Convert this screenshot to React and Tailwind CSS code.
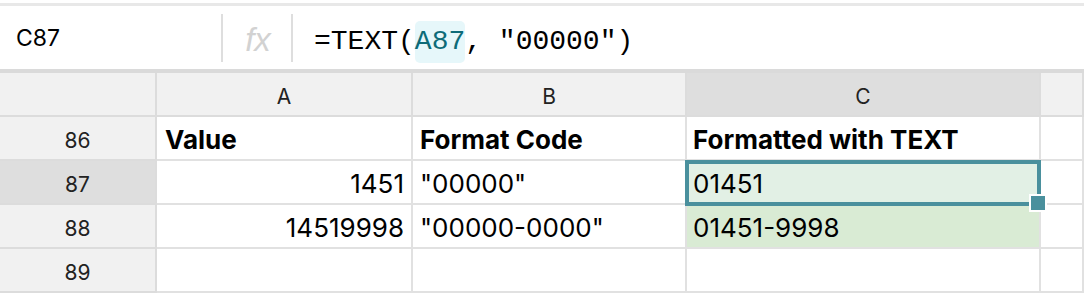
const rows = [
  { n: 86, a: "Value", b: "Format Code", c: "Formatted with TEXT", bold: true },
  { n: 87, a: "1451", b: '"00000"', c: "01451", selected: true },
  { n: 88, a: "14519998", b: '"00000-0000"', c: "01451-9998", green: true },
  { n: 89, a: "", b: "", c: "" },
];

const cellBase = "h-[44px] border-b-2 border-r-2 border-[#e1e1e1] flex items-center pt-[3px] text-[26px] leading-none text-black whitespace-nowrap";

export default function App() {
  return (
    <div className="w-[1084px] h-[294px] bg-white overflow-hidden" style={{ fontFamily: "Inter, 'Noto Sans', sans-serif" }}>
      <div className="h-[3px] bg-white" />
      <div className="h-[3px] bg-[#e8e8e8]" />

      {/* formula bar */}
      <div className="h-[63px] flex items-center border-b-4 border-[#dadada] box-content">
        <div className="w-[221px] pl-4 pt-[2px] text-[23px] text-black">C87</div>
        <div className="w-[2px] h-[48px] bg-[#dedede]" />
        <div className="w-[68px] flex justify-center pl-[2px] pt-[4px]">
          <span className="italic text-[33px] text-[#d2d2d2] leading-none" style={{ fontFamily: "'Liberation Sans', sans-serif" }}>fx</span>
        </div>
        <div className="w-[2px] h-[48px] bg-[#dedede]" />
        <div className="pl-[21px] pt-[8px] text-[28px] text-black flex items-center" style={{ fontFamily: "'Liberation Mono', monospace" }}>
          <span>=TEXT(</span>
          <span className="bg-[#e6f7fa] text-[#0d6b78] rounded-[5px]">A87</span>
          <span>, "00000")</span>
        </div>
      </div>

      {/* grid */}
      <div className="grid grid-cols-[157px_256px_274px_354px_1fr]">
        <div className="h-[44px] border-b-2 border-r-2 border-[#dcdcdc] bg-[#f1f1f1]" />
        {["A", "B", "C", ""].map((l, i) => (
          <div
            key={i}
            className={`h-[44px] border-b-2 border-r-2 border-[#dcdcdc] flex items-center justify-center pt-[6px] text-[21px] text-[#222] ${l === "C" ? "bg-[#dedede]" : "bg-[#f1f1f1]"}`}
          >
            {l}
          </div>
        ))}

        {rows.map((r) => (
          <div key={r.n} className="contents">
            <div className={`h-[44px] border-b-2 border-r-2 border-[#dcdcdc] flex items-center justify-center pt-[6px] text-[21px] text-[#222] ${r.selected ? "bg-[#dedede]" : "bg-[#f1f1f1]"}`}>
              {r.n}
            </div>
            <div className={`${cellBase} justify-end pr-[7px] ${r.bold ? "font-bold justify-start pl-[8px]" : ""}`}>{r.a}</div>
            <div className={`${cellBase} pl-[7px] ${r.bold ? "font-bold" : ""}`}>{r.b}</div>
            <div className={`${cellBase} pl-[6px] relative ${r.bold ? "font-bold" : ""} ${r.green ? "bg-[#d9ebd4]" : ""} ${r.selected ? "bg-[#e2f0e5] z-10" : ""}`}>
              {r.c}
              {r.selected && (
                <>
                  <div className="absolute left-[-2px] top-[-1px] right-[-2px] bottom-[-3px] border-4 border-[#4a909d]" />
                  <div className="absolute right-[-8px] bottom-[-9px] w-[18px] h-[18px] bg-[#4a909d] border-2 border-white" />
                </>
              )}
            </div>
            <div className={`${cellBase} border-r-0`} />
          </div>
        ))}
      </div>
    </div>
  );
}
